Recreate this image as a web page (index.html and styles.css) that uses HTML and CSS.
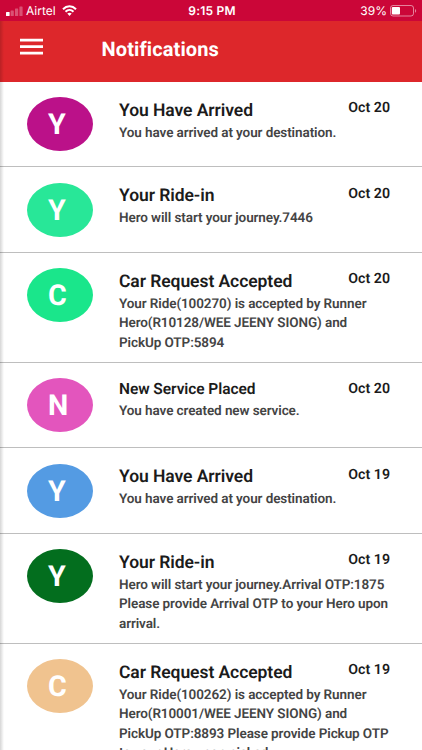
FILE: index.html
```html
<!DOCTYPE html>
<html lang="en">
<head>
<meta charset="utf-8">
<title>Notifications</title>
<link rel="stylesheet" href="styles.css">
</head>
<body>
<div class="screen">
  <div class="statusbar">
    <div class="carrier">
      <svg class="signal" width="17" height="14" viewBox="0 0 17 14" fill="#fff"><rect x="0" y="10" width="3.600" height="4" rx=".6"/><g opacity=".3"><rect x="4.600" y="8.500" width="3.200" height="5.500" rx=".6"/><rect x="9" y="6.500" width="3.200" height="7.500" rx=".6"/><rect x="13.400" y="4.500" width="3.200" height="9.500" rx=".6"/></g></svg>
      <span class="carrier-name">Airtel</span>
      <svg class="wifi" width="15" height="11" viewBox="0 0 15 11" fill="none" stroke="#fff" stroke-width="2"><path d="M1 4.200C4.700.400 10.300.400 14 4.200M3.500 6.700c2.300-2.200 5.700-2.200 8 0"/><path d="M5.300 8.500c1.300-1.100 3.100-1.100 4.400 0L7.500 10.900z" fill="#fff" stroke="none"/></svg>
    </div>
    <div class="clock">9:15 PM</div>
    <div class="power"><span class="percent">39%</span>
      <svg width="27" height="12" viewBox="0 0 27 12"><rect x=".5" y=".5" width="23" height="10.500" rx="2.500" fill="none" stroke="#fff" stroke-opacity=".5"/><rect x="1.800" y="2" width="8.200" height="7.500" rx="1" fill="#fff"/><path d="M25 4c1.600.6 1.600 3.200 0 3.800z" fill="#fff" opacity=".5"/></svg>
    </div>
  </div>
  <header class="appbar">
    <svg class="menu" width="24" height="17" viewBox="0 0 24 17" fill="#fff"><path d="M0 .8h23v2.600H0zM0 7.300h23v2.600H0zM0 13.800h23v2.600H0z"/></svg>
    <h1>Notifications</h1>
  </header>
  <main>
    <article class="row"><div class="avatar magenta">Y</div><div class="body"><h2>You Have Arrived</h2><p>You have arrived at your destination.</p></div><time>Oct 20</time></article>
    <article class="row"><div class="avatar mint">Y</div><div class="body"><h2>Your Ride-in</h2><p>Hero will start your journey.7446</p></div><time>Oct 20</time></article>
    <article class="row tall"><div class="avatar green">C</div><div class="body"><h2>Car Request Accepted</h2><p>Your Ride(100270) is accepted by Runner<br>Hero(R10128/WEE JEENY SIONG) and<br>PickUp OTP:5894</p></div><time>Oct 20</time></article>
    <article class="row"><div class="avatar pink">N</div><div class="body compact"><h2>New Service Placed</h2><p>You have created new service.</p></div><time>Oct 20</time></article>
    <article class="row"><div class="avatar blue">Y</div><div class="body"><h2>You Have Arrived</h2><p>You have arrived at your destination.</p></div><time>Oct 19</time></article>
    <article class="row tall"><div class="avatar forest">Y</div><div class="body"><h2>Your Ride-in</h2><p>Hero will start your journey.Arrival OTP:1875<br>Please provide Arrival OTP to your Hero upon<br>arrival.</p></div><time>Oct 19</time></article>
    <article class="row last"><div class="avatar sand">C</div><div class="body"><h2>Car Request Accepted</h2><p>Your Ride(100262) is accepted by Runner<br>Hero(R10001/WEE JEENY SIONG) and<br>PickUp OTP:8893 Please provide Pickup OTP<br>to your Hero upon picked.</p></div><time>Oct 19</time></article>
  </main>
</div>
</body>
</html>
```
FILE: styles.css
```css
* { box-sizing: border-box; }
body { margin: 0; font-family: Roboto, "Liberation Sans", sans-serif; background: #fff; text-rendering: geometricPrecision; }
h1, h2, p { margin: 0; }
.screen { position: relative; width: 422px; height: 750px; overflow: hidden; }
.screen::after { content: ""; position: absolute; left: 0; top: 21px; bottom: 0; width: 4px; background: linear-gradient(90deg, rgba(0,0,0,.16), transparent); }
.statusbar { height: 21px; background: #cb0638; color: #fff; display: grid; grid-template-columns: 1fr auto 1fr; align-items: center; padding: 0 5px 0 6px; font: 12px/21px Inter, sans-serif; }
.carrier { display: flex; align-items: center; }
.carrier-name { margin: 0 6px 0 3px; }
.signal { margin-bottom: 3px; }
.clock { font-weight: 600; padding: 0 0 0 1px; letter-spacing: .2px; }
.power { display: flex; align-items: center; justify-content: flex-end; gap: 3px; }
.appbar { height: 60.5px; background: #dd272b; color: #fff; display: flex; align-items: flex-start; padding: 16.500px 0 0 20px; }
.menu { margin-right: 57.5px; }
h1 { font-size: 20px; line-height: 24px; font-weight: 700; letter-spacing: .12px; margin-top: -.6px; }
.row { height: 85.5px; display: flex; padding: 15.5px 32px 0 27px; border-bottom: 1px solid #bebebe; }
.tall { height: 110px; }
.last { height: 130px; }
.avatar { width: 66px; height: 54px; flex: none; border-radius: 50%; color: #fff; font-weight: 700; font-size: 28.700px; line-height: 56px; padding-left: 21px; }
.body { margin-left: 26px; flex: 1; min-width: 0; white-space: nowrap; }
h2 { font-size: 17.5px; line-height: 22px; font-weight: 600; color: #1b1b1b; padding-top: 2.8px; letter-spacing: -.07px; }
p { font-size: 13.5px; line-height: 19.4px; font-weight: 600; color: #444; margin-top: 2px; letter-spacing: -.09px; }
.compact h2 { font-size: 15.500px; line-height: 19.500px; padding-top: 2.3px; }
time { font-size: 14.2px; line-height: 20px; font-weight: 600; color: #1b1b1b; padding-top: 1.1px; }
.magenta { background: #bb1189; }
.mint { background: #28e798; }
.green { background: #1ae68b; }
.pink { background: #e355bd; }
.blue { background: #549be3; }
.forest { background: #036e1e; }
.sand { background: #f0c38f; }
```
